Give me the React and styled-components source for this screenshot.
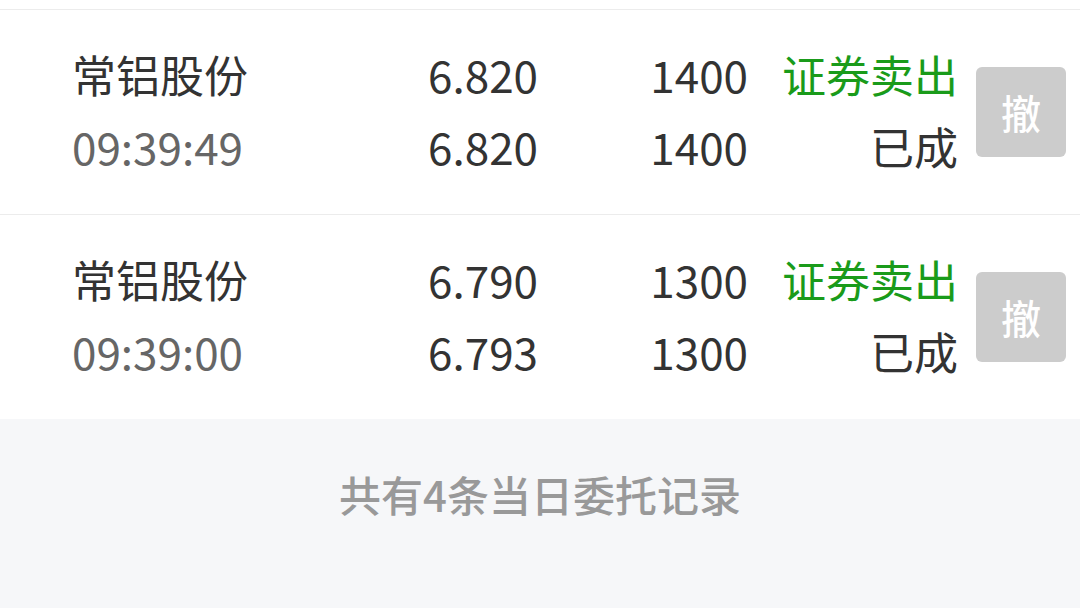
import React from 'react';
import styled, { createGlobalStyle } from 'styled-components';

const GlobalStyle = createGlobalStyle`
  html, body {
    margin: 0;
    padding: 0;
    background: #fff;
    font-family: "Noto Sans CJK SC", "Noto Sans", sans-serif;
  }
`;

const Page = styled.div`
  width: 1080px;
  height: 608px;
  overflow: hidden;
  padding-top: 9px;
  box-sizing: border-box;
`;

const Row = styled.div`
  display: grid;
  grid-template-columns: 200px 266px 210px 210px 108px;
  align-items: center;
  height: 205px;
  box-sizing: border-box;
  border-top: 1px solid #ececec;
  padding: 0 14px 0 72px;
`;

const Cell = styled.div`
  display: flex;
  flex-direction: column;
  align-items: ${({ $right }) => ($right ? 'flex-end' : 'flex-start')};
  align-self: start;
  padding-top: 28px;
`;

const Line = styled.div`
  font-size: 44px;
  line-height: 72px;
  white-space: nowrap;
  color: ${({ $tone }) =>
    $tone === 'sub' ? '#666' : $tone === 'green' ? '#1a9b1a' : '#333'};
`;

const CancelButton = styled.button`
  width: 90px;
  height: 90px;
  border: none;
  border-radius: 6px;
  background: #cccccc;
  color: #fff;
  font-family: inherit;
  font-size: 40px;
  font-weight: 500;
  padding: 0;
  justify-self: end;
`;

const Footer = styled.div`
  background: #f6f7f9;
  height: 300px;
  padding-top: 54px;
  box-sizing: border-box;
  text-align: center;
  font-size: 42px;
  line-height: 42px;
  font-weight: 500;
  color: #999;
`;

const orders = [
  { name: '常铝股份', time: '09:39:49', price: '6.820', dealPrice: '6.820', qty: '1400', dealQty: '1400', side: '证券卖出', status: '已成' },
  { name: '常铝股份', time: '09:39:00', price: '6.790', dealPrice: '6.793', qty: '1300', dealQty: '1300', side: '证券卖出', status: '已成' },
];

export default function App() {
  return (
    <Page>
      <GlobalStyle />
      {orders.map((o, i) => (
        <Row key={i}>
          <Cell>
            <Line>{o.name}</Line>
            <Line $tone="sub">{o.time}</Line>
          </Cell>
          <Cell $right>
            <Line>{o.price}</Line>
            <Line>{o.dealPrice}</Line>
          </Cell>
          <Cell $right>
            <Line>{o.qty}</Line>
            <Line>{o.dealQty}</Line>
          </Cell>
          <Cell $right>
            <Line $tone="green">{o.side}</Line>
            <Line>{o.status}</Line>
          </Cell>
          <CancelButton>撤</CancelButton>
        </Row>
      ))}
      <Footer>共有4条当日委托记录</Footer>
    </Page>
  );
}
